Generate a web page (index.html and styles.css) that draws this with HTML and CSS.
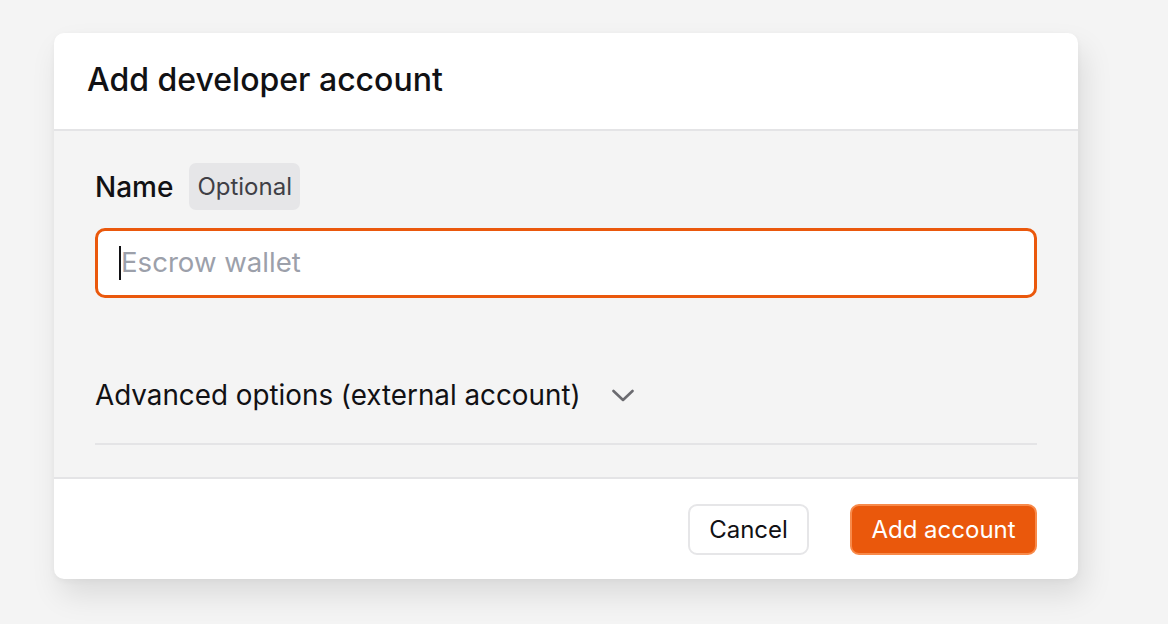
FILE: index.html
```html
<!DOCTYPE html>
<html lang="en">
<head>
<meta charset="utf-8">
<title>Add developer account</title>
<link rel="stylesheet" href="styles.css">
</head>
<body>
<div class="page">
  <div class="dialog">
    <div class="dialog-header">
      <h1 class="dialog-title">Add developer account</h1>
    </div>
    <div class="dialog-body">
      <div class="field-label">
        <span class="label-text">Name</span>
        <span class="badge">Optional</span>
      </div>
      <div class="input">
        <span class="caret"></span>
        <span class="placeholder">Escrow wallet</span>
      </div>
      <div class="advanced">
        <span class="advanced-text">Advanced options (external account)</span>
        <svg class="chevron" width="22" height="14" viewBox="0 0 22 14" fill="none">
          <path d="M1.5 2 L11 11 L20.5 2" stroke="#6b6b70" stroke-width="2.6" stroke-linecap="round" stroke-linejoin="round"/>
        </svg>
      </div>
      <div class="divider"></div>
    </div>
    <div class="dialog-footer">
      <button class="btn btn-secondary">Cancel</button>
      <button class="btn btn-primary">Add account</button>
    </div>
  </div>
</div>
</body>
</html>
```

FILE: styles.css
```css
* { box-sizing: border-box; }
html, body {
  margin: 0;
  padding: 0;
  background: #f4f4f4;
  font-family: Inter, "Noto Sans", "Liberation Sans", sans-serif;
  color: #111114;
}
.page {
  width: 1168px;
  height: 624px;
  padding: 33px 0 0 54px;
}
.dialog {
  width: 1024px;
  background: #ffffff;
  border-radius: 10px;
  overflow: hidden;
  box-shadow: 6px 16px 30px rgba(0, 0, 0, 0.10), 0 2px 6px rgba(0, 0, 0, 0.04);
}
.dialog-header {
  height: 98px;
  padding: 0 33px;
  display: flex;
  align-items: center;
  border-bottom: 2px solid #e4e4e6;
}
.dialog-title {
  margin: 0;
  font-size: 32px;
  font-weight: 500;
  color: #111114;
  padding-bottom: 3px;
}
.dialog-body {
  background: #f4f4f4;
  padding: 32px 41px 32px 41px;
  border-bottom: 2px solid #e4e4e6;
}
.field-label {
  display: flex;
  align-items: center;
  gap: 16px;
  height: 47px;
}
.label-text {
  font-size: 28px;
  font-weight: 500;
  color: #111114;
}
.badge {
  height: 47px;
  display: flex;
  align-items: center;
  padding: 0 8px;
  background: #e6e6e8;
  border-radius: 7px;
  font-size: 24px;
  color: #3f3f46;
}
.input {
  margin-top: 18px;
  height: 70px;
  background: #ffffff;
  border: 3px solid #ea580c;
  border-radius: 10px;
  display: flex;
  align-items: center;
  padding-left: 21px;
}
.caret {
  width: 2px;
  height: 34px;
  background: #111114;
}
.placeholder {
  font-size: 27.6px;
  color: #9ca0aa;
  margin-top: -2px;
}
.advanced {
  margin-top: 70px;
  display: flex;
  align-items: center;
  gap: 31px;
  height: 56px;
}
.advanced-text {
  font-size: 27.8px;
  color: #111114;
  margin-top: -3px;
}
.chevron {
  display: block;
  margin-top: 0;
}
.divider {
  margin-top: 19px;
  height: 2px;
  background: #e4e4e6;
}
.dialog-footer {
  height: 100px;
  display: flex;
  align-items: center;
  justify-content: flex-end;
  gap: 41px;
  padding: 0 41px;
}
.btn {
  height: 51px;
  border-radius: 9px;
  font-family: Inter, "Noto Sans", "Liberation Sans", sans-serif;
  font-size: 24px;
  padding: 0;
  white-space: nowrap;
  cursor: pointer;
}
.btn-secondary {
  width: 121px;
  background: #ffffff;
  border: 2px solid #e6e6e8;
  color: #111114;
}
.btn-primary {
  width: 187px;
  background: #ea580c;
  border: 2px solid #f88a4a;
  color: #ffffff;
}
```
